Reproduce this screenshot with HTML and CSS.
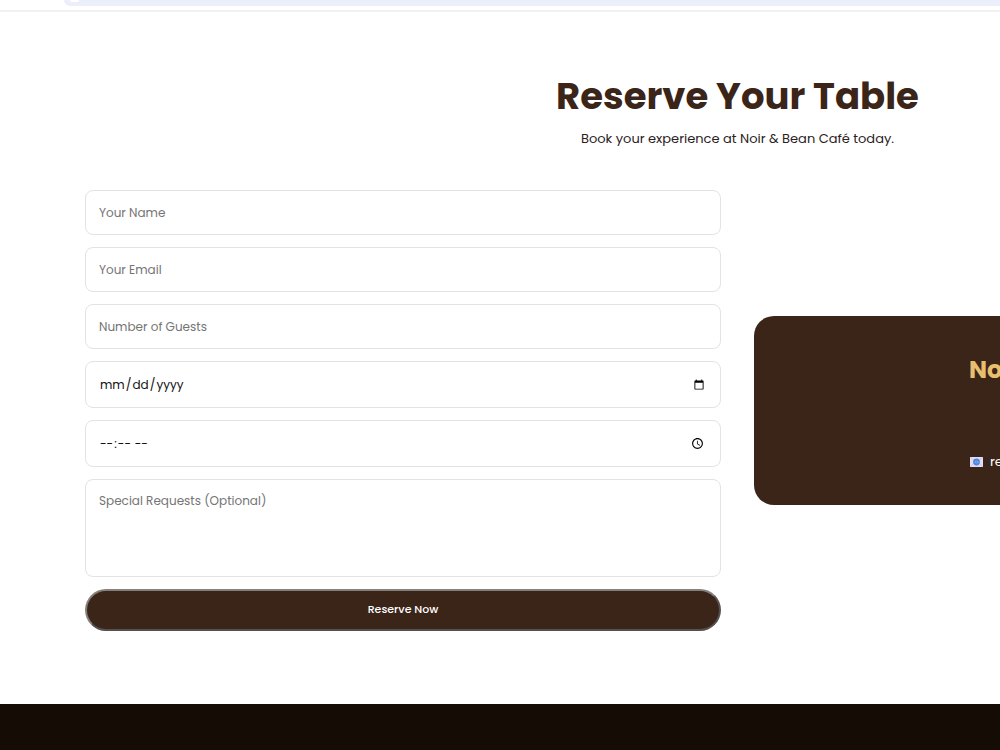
FILE: index.html
```html
<!DOCTYPE html>
<html lang="en">
<head>
    <meta charset="UTF-8">
    <meta name="viewport" content="width=device-width, initial-scale=1.0">
    <title>Reserve Your Table</title>
    <link rel="stylesheet" href="styles.css">
</head>
<body>
    <div class="page">
        <div class="topbar">
            <div class="address"><span class="address-icon"></span></div>
        </div>
        <main class="reservation">
            <h1>Reserve Your Table</h1>
            <p class="intro">Book your experience at Noir &amp; Bean Café today.</p>
            <div class="container">
                <form class="booking-form">
                    <input type="text" placeholder="Your Name" aria-label="Your Name">
                    <input type="email" placeholder="Your Email" aria-label="Your Email">
                    <input type="number" placeholder="Number of Guests" aria-label="Number of Guests">
                    <input type="date" class="picker" aria-label="Date">
                    <input type="time" class="picker" aria-label="Time">
                    <textarea placeholder="Special Requests (Optional)" aria-label="Special Requests"></textarea>
                    <button type="submit">Reserve Now</button>
                </form>
                <div class="info-card">
                    <h2>Noir &amp; Bean Café</h2>
                    <p class="email">
                        <svg class="email-icon" viewBox="0 0 13 10" aria-hidden="true">
                            <rect width="13" height="10" fill="#e3dcf3"/>
                            <path d="M0 0l5 4M13 0L8 4M0 10l4-4M13 10L9 6" stroke="#c9bfe6" stroke-width="0.6"/>
                            <circle cx="6.5" cy="5" r="3.4" fill="#4c86dc"/>
                            <circle cx="6.5" cy="5" r="1.2" fill="none" stroke="#86b0ee" stroke-width="0.7"/>
                            <path d="M7.8 4v1.4q.5.8 1 0" fill="none" stroke="#86b0ee" stroke-width="0.6"/>
                        </svg>
                        reservations@noirbean.com
                    </p>
                </div>
            </div>
        </main>
        <footer class="footer"></footer>
    </div>
</body>
</html>
```

FILE: styles.css
```css
* { box-sizing: border-box; margin: 0; padding: 0; }
body { font-family: Poppins, Inter, sans-serif; font-size: 13px; color: #2b211c; background: #fff; overflow: hidden; }
.page { min-width: 1475px; min-height: 100vh; display: flex; flex-direction: column; }

.topbar { height: 12px; padding-left: 64px; border-bottom: 2px solid #f1f1f2; }
.address { height: 6px; background: #ebeffa; border-radius: 0 0 0 14px; padding-left: 6px; }
.address-icon { display: block; width: 9px; height: 2px; background: #fff; border-radius: 0 0 5px 5px; }

.reservation { padding: 60px 85px 73px; text-align: center; }
h1 { font-size: 37px; line-height: 48px; color: #3b2519; }
.intro { margin-top: 8px; line-height: 22px; }

.container { max-width: 1305px; margin: 40px auto 0; display: grid; grid-template-columns: 1fr 1fr; gap: 33px; align-items: center; }
.booking-form { display: flex; flex-direction: column; gap: 12px; }
input, textarea { width: 100%; height: 45px; padding: 12px 13px; border: 1px solid #e3e3e3; border-radius: 8px; background: #fff; font-family: inherit; font-size: 12px; color: #111; }
.picker { height: 47px; }
textarea { height: 98px; resize: none; }
::placeholder { color: #757575; }
button { height: 42px; padding-bottom: 1px; border: 2px solid; border-color: #86807c #555150 #555150 #86807c; border-radius: 24px; background: #3b2519; color: #fff; font-family: inherit; font-size: 11px; font-weight: 500; }

.info-card { height: 189px; padding: 36px 32px; border-radius: 20px; background: #3b2519; color: #fff; }
.info-card h2 { font-size: 24px; line-height: 36px; color: #e8be6f; }
.email { display: flex; justify-content: center; align-items: center; gap: 7px; margin-top: 63px; line-height: 22px; }
.email-icon { width: 13px; height: 10px; }

.footer { flex: 1; background: #150c06; }
```
